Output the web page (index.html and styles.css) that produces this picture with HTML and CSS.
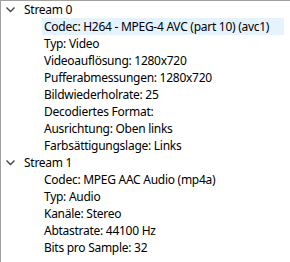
FILE: index.html
```html
<!DOCTYPE html>
<html lang="de">
<head>
    <meta charset="UTF-8">
    <title>Stream-Eigenschaften</title>
    <link rel="stylesheet" href="styles.css">
</head>
<body>
    <div class="tree">
        <div class="node">
            <div class="node-head">
                <svg class="chevron" width="9" height="6" viewBox="0 0 9 6">
                    <path d="M0.5 0.5 L4.5 4.5 L8.5 0.5" fill="none" stroke="#404040" stroke-width="1.3"/>
                </svg>
                <span>Stream 0</span>
            </div>
            <div class="children">
                <div class="leaf selected">Codec: H264 - MPEG-4 AVC (part 10) (avc1)</div>
                <div class="leaf">Typ: Video</div>
                <div class="leaf">Videoauflösung: 1280x720</div>
                <div class="leaf">Pufferabmessungen: 1280x720</div>
                <div class="leaf">Bildwiederholrate: 25</div>
                <div class="leaf">Decodiertes Format:</div>
                <div class="leaf">Ausrichtung: Oben links</div>
                <div class="leaf">Farbsättigungslage: Links</div>
            </div>
        </div>
        <div class="node">
            <div class="node-head">
                <svg class="chevron" width="9" height="6" viewBox="0 0 9 6">
                    <path d="M0.5 0.5 L4.5 4.5 L8.5 0.5" fill="none" stroke="#404040" stroke-width="1.3"/>
                </svg>
                <span>Stream 1</span>
            </div>
            <div class="children">
                <div class="leaf">Codec: MPEG AAC Audio (mp4a)</div>
                <div class="leaf">Typ: Audio</div>
                <div class="leaf">Kanäle: Stereo</div>
                <div class="leaf">Abtastrate: 44100 Hz</div>
                <div class="leaf">Bits pro Sample: 32</div>
            </div>
        </div>
    </div>
</body>
</html>
```

FILE: styles.css
```css
body {
    margin: 0;
    background-color: white;
    font-family: "Noto Sans", "Liberation Sans", sans-serif;
    font-size: 12px;
    letter-spacing: -0.27px;
    color: #000;
}
.tree {
    height: 261px;
    border-top: 1px solid #a0a0a0;
    border-left: 1px solid #a0a0a0;
    overflow: hidden;
}
.node-head {
    display: flex;
    align-items: center;
    height: 17px;
    line-height: 17px;
}
.chevron {
    margin-left: 5px;
    margin-right: 9px;
    margin-top: 1px;
}
.leaf {
    height: 17px;
    line-height: 17px;
    margin-left: 41px;
    padding-left: 2px;
    width: 240px;
    white-space: nowrap;
}
.selected {
    background-color: #e5f3ff;
}
```
